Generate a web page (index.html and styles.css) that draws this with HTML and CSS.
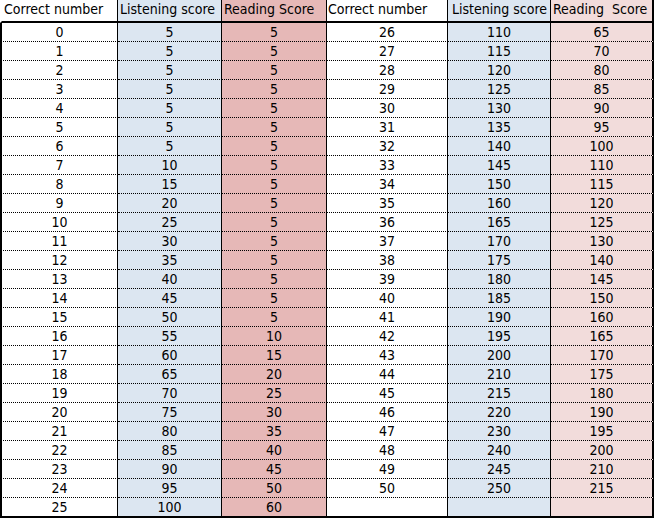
FILE: index.html
```html
<!DOCTYPE html>
<html>
<head>
<meta charset="utf-8">
<link rel="stylesheet" href="styles.css">
</head>
<body>
<div class="sheet">
<table class="score left">
<colgroup><col class="c1"><col class="c2"><col class="c3"></colgroup>
<thead><tr><th class="h1">Correct number</th><th class="h2">Listening score</th><th class="h3">Reading Score</th></tr></thead>
<tbody>
<tr><td>0</td><td>5</td><td>5</td></tr>
<tr><td>1</td><td>5</td><td>5</td></tr>
<tr><td>2</td><td>5</td><td>5</td></tr>
<tr><td>3</td><td>5</td><td>5</td></tr>
<tr><td>4</td><td>5</td><td>5</td></tr>
<tr><td>5</td><td>5</td><td>5</td></tr>
<tr><td>6</td><td>5</td><td>5</td></tr>
<tr><td>7</td><td>10</td><td>5</td></tr>
<tr><td>8</td><td>15</td><td>5</td></tr>
<tr><td>9</td><td>20</td><td>5</td></tr>
<tr><td>10</td><td>25</td><td>5</td></tr>
<tr><td>11</td><td>30</td><td>5</td></tr>
<tr><td>12</td><td>35</td><td>5</td></tr>
<tr><td>13</td><td>40</td><td>5</td></tr>
<tr><td>14</td><td>45</td><td>5</td></tr>
<tr><td>15</td><td>50</td><td>5</td></tr>
<tr><td>16</td><td>55</td><td>10</td></tr>
<tr><td>17</td><td>60</td><td>15</td></tr>
<tr><td>18</td><td>65</td><td>20</td></tr>
<tr><td>19</td><td>70</td><td>25</td></tr>
<tr><td>20</td><td>75</td><td>30</td></tr>
<tr><td>21</td><td>80</td><td>35</td></tr>
<tr><td>22</td><td>85</td><td>40</td></tr>
<tr><td>23</td><td>90</td><td>45</td></tr>
<tr><td>24</td><td>95</td><td>50</td></tr>
<tr class="last"><td>25</td><td>100</td><td>60</td></tr>
<tr class="fill"><td></td><td></td><td></td></tr>
</tbody>
</table>
<table class="score right">
<colgroup><col class="c1"><col class="c2"><col class="c3"></colgroup>
<thead><tr><th class="h1">Correct number</th><th class="h2">Listening score</th><th class="h3">Reading  Score</th></tr></thead>
<tbody>
<tr><td>26</td><td>110</td><td>65</td></tr>
<tr><td>27</td><td>115</td><td>70</td></tr>
<tr><td>28</td><td>120</td><td>80</td></tr>
<tr><td>29</td><td>125</td><td>85</td></tr>
<tr><td>30</td><td>130</td><td>90</td></tr>
<tr><td>31</td><td>135</td><td>95</td></tr>
<tr><td>32</td><td>140</td><td>100</td></tr>
<tr><td>33</td><td>145</td><td>110</td></tr>
<tr><td>34</td><td>150</td><td>115</td></tr>
<tr><td>35</td><td>160</td><td>120</td></tr>
<tr><td>36</td><td>165</td><td>125</td></tr>
<tr><td>37</td><td>170</td><td>130</td></tr>
<tr><td>38</td><td>175</td><td>140</td></tr>
<tr><td>39</td><td>180</td><td>145</td></tr>
<tr><td>40</td><td>185</td><td>150</td></tr>
<tr><td>41</td><td>190</td><td>160</td></tr>
<tr><td>42</td><td>195</td><td>165</td></tr>
<tr><td>43</td><td>200</td><td>170</td></tr>
<tr><td>44</td><td>210</td><td>175</td></tr>
<tr><td>45</td><td>215</td><td>180</td></tr>
<tr><td>46</td><td>220</td><td>190</td></tr>
<tr><td>47</td><td>230</td><td>195</td></tr>
<tr><td>48</td><td>240</td><td>200</td></tr>
<tr><td>49</td><td>245</td><td>210</td></tr>
<tr><td>50</td><td>250</td><td>215</td></tr>
<tr class="last"><td></td><td></td><td></td></tr>
<tr class="fill"><td></td><td></td><td></td></tr>
</tbody>
</table>
</div>
</body>
</html>
```

FILE: styles.css
```css
html, body {
  margin: 0;
  padding: 0;
  background: #ffffff;
  overflow: hidden;
}

.sheet {
  display: flex;
  width: 654px;
  font-family: "DejaVu Sans Condensed", "DejaVu Sans", sans-serif;
  font-size: 14px;
  color: #000;
}

.score {
  border-collapse: separate;
  border-spacing: 0;
  table-layout: fixed;
}

.score th,
.score td {
  padding: 0;
  box-sizing: border-box;
  border-right: 1px solid #000;
  white-space: pre;
  overflow: hidden;
}

.score th {
  height: 22px;
  font-weight: normal;
  text-align: left;
  padding-left: 2px;
  padding-bottom: 2px;
  border-bottom: 2px solid #000;
  line-height: 19px;
  vertical-align: middle;
}

.score td {
  height: 19px;
  line-height: 18px;
  text-align: center;
  border-bottom: 1px dotted #000;
  vertical-align: middle;
}

.score tr.last td {
  height: 20px;
  border-bottom: 2px solid #000;
}

.score tr.fill td {
  height: 6px;
  line-height: 6px;
  border: none;
}

.score td:nth-child(1),
.score th:nth-child(1) {
  background: #ffffff;
}

.score td:nth-child(2),
.score th:nth-child(2) {
  background: #dce6f1;
}

.left td:nth-child(3),
.left th:nth-child(3) {
  background: #e6b8b7;
}

.right td:nth-child(3),
.right th:nth-child(3) {
  background: #f2dcdb;
}

/* left table: 327px */
.left { width: 327px; }
.left td:first-child { border-left: 2px solid #000; }
.left th:first-child { border-left: 2px solid #fff; }
.left .c1 { width: 118px; }
.left .c2 { width: 104px; }
.left .c3 { width: 105px; }

/* right table: 327px */
.right { width: 327px; }
.right .c1 { width: 121px; }
.right .c2 { width: 103px; }
.right .c3 { width: 103px; }
.right td:last-child,
.right th:last-child { border-right: 2px solid #000; }
.right th:nth-child(2) { padding-left: 4px; }
.right th:nth-child(1) { padding-left: 1px; }
```
